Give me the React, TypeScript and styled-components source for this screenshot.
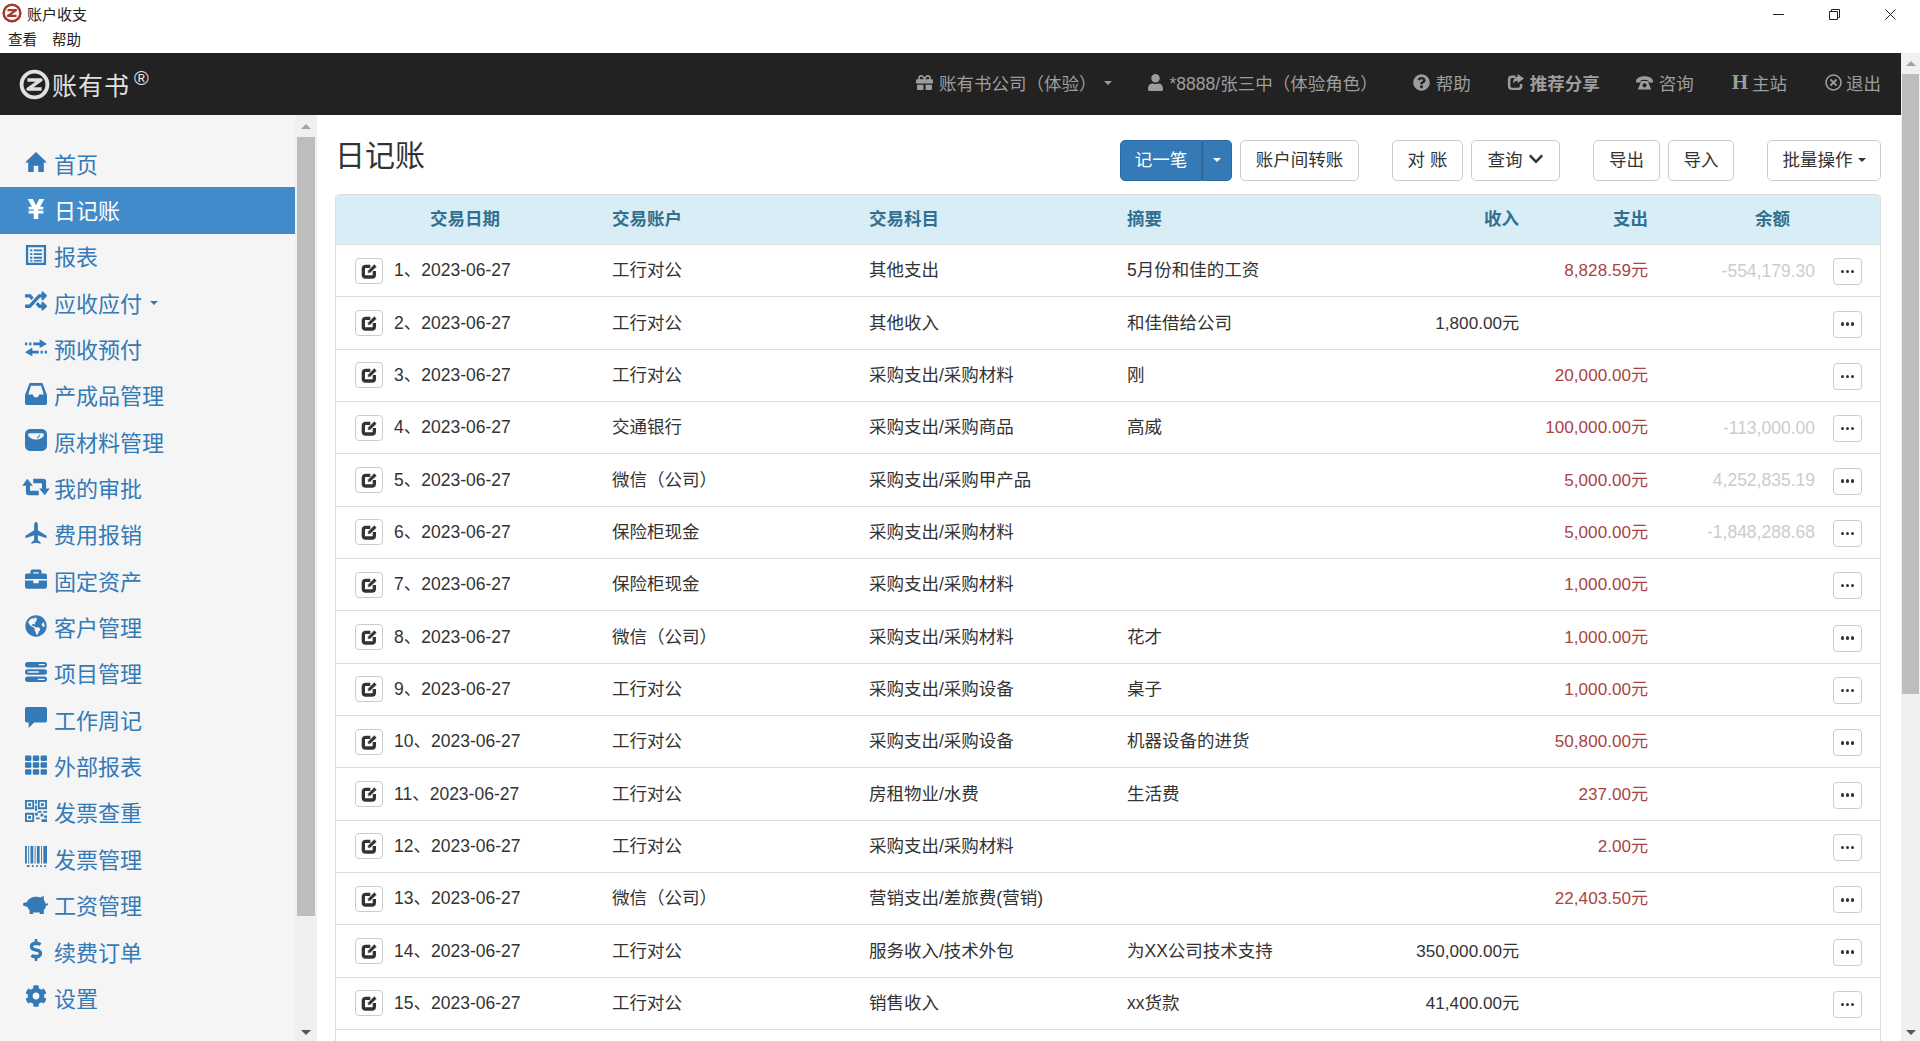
import React from "react";
import styled, { createGlobalStyle } from "styled-components";
import {
  FaRandom,
  FaBriefcase,
  FaGlobeAmericas,
  FaTh,
  FaDollarSign,
  FaCog,
  FaGift,
  FaUser,
  FaQuestionCircle,
  FaRegTimesCircle,
  FaChevronDown,
} from "react-icons/fa";

const FONT = `"Liberation Sans", "Noto Sans CJK SC", sans-serif`;
const BLUE = "#337ab7";

const GlobalStyle = createGlobalStyle`
  html, body {
    margin: 0;
    padding: 0;
    height: 100%;
    overflow: hidden;
    background: #fff;
  }
  #root {
    height: 100%;
  }
  * {
    box-sizing: border-box;
  }
`;

/* drawn icons, the package ones are not close enough to these glyphs */
const LogoMark = ({ size }: { size: number }) => (
  <svg width={size} height={size} viewBox="0 0 24 24" fill="none" stroke="currentColor">
    <circle cx="12" cy="12" r="10" strokeWidth="3" />
    <path d="M6.5 8.5h10.5L7 15.5h10.5" strokeWidth="2.6" strokeLinejoin="round" />
  </svg>
);
const HomeIcon = () => (
  <svg viewBox="0 0 24 24" fill="currentColor">
    <path d="M12 1l12 11.500h-3.500V23H14.500v-7h-5v7H3.500V12.500H0z" />
  </svg>
);
const YenIcon = () => (
  <svg viewBox="0 0 24 24" fill="currentColor">
    <path d="M3 1h5.500L12 8l3.500-7H21l-4.500 8.500H20v3h-5.500V14H20v3h-5.500v6h-5v-6H4v-3h5.500v-1.500H4v-3h3.500z" />
  </svg>
);
const TransferIcon = () => (
  <svg viewBox="0 0 24 24" fill="currentColor">
    <path d="M0 6h2.500v3H0zM4.500 6H7v3H4.500zM9 6h7V2.500L24 7.500 16 12V9H9zM24 15h-2.500v3H24zM19.500 15H17v3h2.500zM15 15H8v-3.500L0 16.500 8 21v-3h7z" />
  </svg>
);
const ListIcon = () => (
  <svg viewBox="0 0 24 24" fill="currentColor">
    <path
      fillRule="evenodd"
      d="M1 1h22v22H1zM3.500 3.500v17h17v-17zM5.500 6H8v2H5.500zM9.500 6h9v2h-9zM5.500 10H8v2H5.500zM9.500 10h9v2h-9zM5.500 14H8v2H5.500zM9.500 14h9v2h-9zM5.500 17.500H8v1.500H5.500zM9.500 17.500h9V19h-9z"
    />
  </svg>
);
const InboxIcon = () => (
  <svg viewBox="0 0 24 24" fill="currentColor">
    <path
      fillRule="evenodd"
      d="M5 0h14l5 13v9a2 2 0 0 1-2 2H2a2 2 0 0 1-2-2v-9zM6.500 3L3.500 12.500h5l1.500 3h4l1.500-3h5L17.500 3z"
    />
  </svg>
);
const ScaleIcon = () => (
  <svg viewBox="0 0 24 24" fill="currentColor">
    <path
      fillRule="evenodd"
      d="M6 0h12c3.500 0 6 2.500 6 6v12c0 3.500-2.500 6-6 6H6c-3.500 0-6-2.500-6-6V6c0-3.500 2.500-6 6-6zM5 4.500C3.800 4.500 3 5.500 3.500 6.800 4.500 9.500 8 11.500 12 11.500s7.500-2 8.500-4.700C21 5.500 20.200 4.500 19 4.500z"
    />
    <path d="M13 9.500l3-3.500.8.6-2.600 3.700z" />
  </svg>
);
const RetweetIcon = () => (
  <svg viewBox="0 0 24 24" fill="currentColor">
    <path d="M2.500 3l6 7.500h-3V16H15v5H4a3 3 0 0 1-3-3v-7.500h-4zM21.500 21l-6-7.500h3V8H9V3h11a3 3 0 0 1 3 3v7.500h4z" />
  </svg>
);
const PlaneIcon = () => (
  <svg viewBox="0 0 24 24" fill="currentColor">
    <path d="M12 0c1.200 0 2 1.500 2 3v6l9.500 6v2.800L14 14.500v5.500l3 2v1.800l-5-1.300-5 1.300V22l3-2v-5.500L.5 17.800V15L10 9V3c0-1.500.8-3 2-3z" />
  </svg>
);
const StackIcon = () => (
  <svg viewBox="0 0 24 24" fill="currentColor">
    <path
      fillRule="evenodd"
      d="M3 1h18a2.500 2.500 0 0 1 0 6H3a2.500 2.500 0 0 1 0-6zM15 3.200v1.500h6.500V3.200zM3 9h18a3 3 0 0 1 0 6H3a3 3 0 0 1 0-6zM3 11.300v1.500h12v-1.500zM3 17h18a3 3 0 0 1 0 6H3a3 3 0 0 1 0-6zM14 19.300v1.500h7.500v-1.500z"
    />
  </svg>
);
const CommentIcon = () => (
  <svg viewBox="0 0 24 24" fill="currentColor">
    <path d="M2 0h20a2 2 0 0 1 2 2v13a2 2 0 0 1-2 2H10l-6 6v-6H2a2 2 0 0 1-2-2V2a2 2 0 0 1 2-2z" />
  </svg>
);
const QrIcon = () => (
  <svg viewBox="0 0 24 24" fill="currentColor">
    <path
      fillRule="evenodd"
      d="M0 0h10v10H0zM2 2v6h6V2zM3.500 3.500h3v3h-3zM14 0h10v10H14zM16 2v6h6V2zM17.500 3.500h3v3h-3zM0 14h10v10H0zM2 16v6h6v-6zM3.500 17.500h3v3h-3zM11 0h2v4h-2zM11 6h2v6h-2zM14 12h4v2h-4zM20 12h4v2h-4zM11 14h3v3h-3zM17 15h3v3h-3zM12 19h4v2h-4zM21 17h3v3h-3zM18 21h6v3h-6z"
    />
  </svg>
);
const BarcodeIcon = () => (
  <svg viewBox="0 0 24 24" fill="currentColor">
    <path d="M0 0h2v19H0zM3.500 0h1v19h-1zM6 0h3v19H6zM10.500 0h1v19h-1zM13 0h3v19h-3zM17.500 0h1v19h-1zM20 0h4v19h-4zM2 21h3v2H2zM7.500 21h2v2h-2zM12 21h2v2h-2zM16.500 21h2v2h-2zM21 21h2v2h-2z" />
  </svg>
);
const PiggyIcon = () => (
  <svg viewBox="0 0 24 24" fill="currentColor">
    <path d="M-2 11l4-1c1-3 5-6 10-6 1.800 0 3.500.4 5 1l3.500-2v5c1.200 1 2 2.500 2.300 4 .7 0 1.400-.3 1.700-1l1 .6c-.5 1.500-1.700 2.200-2.700 2.200 0 2-1 3.700-2.300 5V23h-4.500v-2c-1.200.3-2.400.4-3.500.4s-2.300-.1-3.500-.4v2H5v-4.500C3.800 17.500 3 16.500 2.500 15L-2 14z" />
  </svg>
);
const ShareIcon = () => (
  <svg viewBox="0 0 24 24" fill="currentColor">
    <path
      d="M12 4H7a4 4 0 0 0-4 4v9a4 4 0 0 0 4 4h9a4 4 0 0 0 4-4v-3"
      fill="none"
      stroke="currentColor"
      strokeWidth="3.500"
    />
    <path d="M15 0l9 6.500-9 6.500V9.500c-3 0-5 1-6.500 4.500 0-6 2.500-9.500 6.500-10z" />
  </svg>
);
const PhoneIcon = () => (
  <svg viewBox="0 0 24 24" fill="currentColor">
    <path d="M0 10C0 6 5 3 12 3s12 3 12 7v2h-6.500V9c-1.600-.6-3.500-1-5.500-1s-3.900.4-5.500 1v3H0z" />
    <path fillRule="evenodd" d="M7.500 10h9l5 12h-19zM12 13a3 3 0 1 0 0 6 3 3 0 0 0 0-6z" />
  </svg>
);
const EditIcon = () => (
  <svg viewBox="0 0 24 24" fill="none" stroke="currentColor">
    <path d="M14 5H7a3.500 3.500 0 0 0-3.500 3.500v9A3.500 3.500 0 0 0 7 21h9.500a3.500 3.500 0 0 0 3.500-3.500V12" strokeWidth="5" />
    <path d="M9.500 15.500l1-4.500L20 1.500 24 5.500 14 15z" fill="currentColor" stroke="#fff" strokeWidth="1.200" />
  </svg>
);

/* window chrome */
const TitleBar = styled.header`
  height: 53px;
  flex: none;
  background: #fff;
  color: #222;
  font-family: ${FONT};
  display: flex;
  justify-content: space-between;
`;
const TitleLeft = styled.div`
  display: flex;
  flex-direction: column;
`;
const TitleRow = styled.div`
  height: 28px;
  display: flex;
  align-items: center;
  gap: 5px;
  padding-left: 2px;
  font-size: 15px;
  color: #a5392c;
`;
const TitleText = styled.span`
  color: #222;
`;
const MenuRow = styled.div`
  display: flex;
  gap: 15px;
  padding: 1px 0 0 8px;
  font-size: 14.5px;
  line-height: 26px;
`;
const WindowControls = styled.div`
  display: flex;
  height: 28px;
  align-items: center;
  padding-right: 24px;
  gap: 45px;
  color: #222;
`;
const ControlIcon = styled.svg`
  width: 11px;
  height: 11px;
  fill: none;
  stroke: currentColor;
  stroke-width: 1;
`;

const Body = styled.div`
  flex: 1;
  min-height: 0;
  display: flex;
`;
const AppColumn = styled.div`
  flex: 1;
  min-width: 0;
  display: flex;
  flex-direction: column;
`;

/* scrollbars */
const ScrollTrack = styled.div<{ $width: number; $pad: number }>`
  width: ${(p) => p.$width}px;
  flex: none;
  background: #f0f0f0;
  display: flex;
  flex-direction: column;
  padding: 0 ${(p) => p.$pad}px;
`;
const ScrollArrowBox = styled.div<{ $height: number }>`
  height: ${(p) => p.$height}px;
  flex: none;
  display: flex;
  align-items: center;
  justify-content: center;
`;
const ScrollArrow = styled.span<{ $down?: boolean }>`
  width: 0;
  height: 0;
  border-left: 5px solid transparent;
  border-right: 5px solid transparent;
  ${(p) =>
    p.$down ? "border-top: 5px solid #555;" : "border-bottom: 5px solid #a3a3a3;"}
`;
const ScrollThumb = styled.div<{ $height: number }>`
  height: ${(p) => p.$height}px;
  flex: none;
  background: #bdbdbd;
`;
const ScrollRest = styled.div`
  flex: 1;
`;

/* top bar */
const Navbar = styled.nav`
  height: 62px;
  flex: none;
  background: #222;
  display: flex;
  align-items: center;
  justify-content: space-between;
  padding: 0 20px 0 19px;
  font-family: ${FONT};
`;
const Brand = styled.div`
  display: flex;
  align-items: center;
  gap: 2px;
  color: #e0e0e0;
  font-size: 25px;
  letter-spacing: 1px;
`;
const BrandMark = styled.span`
  font-size: 20px;
  line-height: 1;
  margin: -12px 0 0 2px;
  letter-spacing: 0;
`;
const NavItems = styled.div`
  display: flex;
  align-items: center;
  margin-top: -3px;
`;
const NavItem = styled.a<{ $bold?: boolean; $ml?: number; $gap?: number }>`
  display: flex;
  align-items: center;
  gap: ${(p) => p.$gap ?? 6}px;
  margin-left: ${(p) => p.$ml ?? 0}px;
  color: #9d9d9d;
  font-size: 17.5px;
  font-weight: ${(p) => (p.$bold ? 700 : 400)};
  svg {
    width: 17px;
    height: 17px;
    flex: none;
  }
`;
const HeaderGlyph = styled.span`
  font-family: "Liberation Serif", serif;
  font-weight: 700;
  font-size: 21px;
  line-height: 1;
`;
const NavCaret = styled.span`
  width: 0;
  height: 0;
  margin-left: 1px;
  border-left: 4px solid transparent;
  border-right: 4px solid transparent;
  border-top: 4px solid #9d9d9d;
`;

/* left menu */
const Content = styled.div`
  flex: 1;
  min-height: 0;
  display: flex;
`;
const Sidebar = styled.aside`
  width: 317px;
  flex: none;
  display: flex;
  background: #f5f5f5;
`;
const SideList = styled.ul`
  width: 295px;
  flex: none;
  list-style: none;
  margin: 0;
  padding: 26px 0 0;
  font-family: ${FONT};
`;
const SideItem = styled.li<{ $active?: boolean }>`
  height: 46.35px;
  display: flex;
  align-items: center;
  padding: 0 0 3px 25px;
  font-size: 22px;
  color: ${(p) => (p.$active ? "#fff" : BLUE)};
  background: ${(p) => (p.$active ? "#428bca" : "transparent")};
`;
const SideIcon = styled.span`
  width: 22px;
  height: 22px;
  flex: none;
  margin: -1px 7px 0 0;
  display: flex;
  align-items: center;
  justify-content: center;
  svg {
    width: 22px;
    height: 22px;
    flex: none;
    overflow: visible;
  }
`;
const SideCaret = styled.span`
  width: 0;
  height: 0;
  margin: 3px 0 0 8px;
  border-left: 4px solid transparent;
  border-right: 4px solid transparent;
  border-top: 4px solid ${BLUE};
`;

/* page */
const Main = styled.main`
  flex: 1;
  min-width: 0;
  display: flex;
  flex-direction: column;
  padding: 25px 20px 0 18px;
  background: #fff;
  color: #333;
  font-family: ${FONT};
  font-size: 17.5px;
`;
const PageHead = styled.div`
  height: 41px;
  flex: none;
  margin-bottom: 13px;
  display: flex;
  align-items: center;
  justify-content: space-between;
`;
const PageTitle = styled.h3`
  margin: 0 0 16px;
  font-size: 30px;
  font-weight: 400;
  color: #333;
`;
const Toolbar = styled.div`
  display: flex;
`;
const ButtonGroup = styled.div`
  display: flex;
  gap: 8px;
  margin-left: 33px;
`;
const Button = styled.button<{ $width: number }>`
  width: ${(p) => p.$width}px;
  height: 41px;
  padding: 0 0 5px;
  background: #fff;
  border: 1px solid #ccc;
  border-radius: 5px;
  color: #333;
  font: inherit;
  display: flex;
  align-items: center;
  justify-content: center;
  gap: 5px;
  svg {
    width: 16px;
    height: 16px;
    margin-top: 2px;
  }
`;
const SplitButton = styled.div`
  display: flex;
`;
const PrimaryButton = styled.button<{ $width: number; $side: "left" | "right" }>`
  width: ${(p) => p.$width}px;
  height: 41px;
  padding: 0 0 5px;
  background: ${BLUE};
  border: 1px solid #2e6da4;
  border-radius: ${(p) => (p.$side === "left" ? "5px 0 0 5px" : "0 5px 5px 0")};
  ${(p) => (p.$side === "right" ? "border-left-color: #286090;" : "")}
  color: #fff;
  font: inherit;
  display: flex;
  align-items: center;
  justify-content: center;
`;
const Caret = styled.span<{ $color: string }>`
  width: 0;
  height: 0;
  margin-top: 4px;
  border-left: 4px solid transparent;
  border-right: 4px solid transparent;
  border-top: 4px solid ${(p) => p.$color};
`;

/* ledger table */
const Panel = styled.section`
  flex: 1;
  min-height: 0;
  border: 1px solid #ddd;
  border-bottom: 0;
  border-radius: 5px 5px 0 0;
  overflow: hidden;
`;
const COLUMNS = "276px 257px 258px 252px 140px 129px 167px 1fr";
const HeadRow = styled.div`
  height: 50px;
  padding-bottom: 5px;
  display: grid;
  grid-template-columns: ${COLUMNS};
  align-items: center;
  background: #d9edf7;
  color: #31708f;
  font-weight: 700;
  border-bottom: 1px solid #ddd;
`;
const HeadCell = styled.div<{ $align?: string; $pad?: string }>`
  text-align: ${(p) => p.$align || "left"};
  padding: ${(p) => p.$pad || "0"};
`;
const Row = styled.div`
  height: 52.35px;
  display: grid;
  grid-template-columns: ${COLUMNS};
  align-items: center;
  border-bottom: 1px solid #ddd;
`;
const DateCell = styled.div`
  display: flex;
  align-items: center;
  gap: 11px;
  padding-left: 19px;
`;
const DateText = styled.span`
  padding-bottom: 4px;
`;
const TextCell = styled.div`
  padding-bottom: 4px;
`;
const Amount = styled.div<{ $color?: string }>`
  padding-bottom: 4px;
  text-align: right;
  font-size: 17.1px;
  color: ${(p) => p.$color || "#333"};
`;
const Balance = styled.div`
  padding-top: 1px;
  text-align: right;
  color: #ccc;
`;
const SquareButton = styled.button<{ $w: number; $h: number }>`
  width: ${(p) => p.$w}px;
  height: ${(p) => p.$h}px;
  padding: 0;
  background: #fff;
  border: 1px solid #ccc;
  border-radius: 4px;
  color: #333;
  display: flex;
  align-items: center;
  justify-content: center;
  flex: none;
  svg {
    width: 16px;
    height: 16px;
  }
`;
const ActionCell = styled.div`
  padding: 2px 0 0 18px;
`;
const Dots = styled.span`
  display: flex;
  gap: 1.5px;
`;
const Dot = styled.i`
  width: 3.5px;
  height: 3.5px;
  border-radius: 50%;
  background: #333;
`;

const sideItems: { label: string; icon: React.ReactNode; active?: boolean; caret?: boolean }[] = [
  { label: "首页", icon: <HomeIcon /> },
  { label: "日记账", icon: <YenIcon />, active: true },
  { label: "报表", icon: <ListIcon /> },
  { label: "应收应付", icon: <FaRandom />, caret: true },
  { label: "预收预付", icon: <TransferIcon /> },
  { label: "产成品管理", icon: <InboxIcon /> },
  { label: "原材料管理", icon: <ScaleIcon /> },
  { label: "我的审批", icon: <RetweetIcon /> },
  { label: "费用报销", icon: <PlaneIcon /> },
  { label: "固定资产", icon: <FaBriefcase /> },
  { label: "客户管理", icon: <FaGlobeAmericas /> },
  { label: "项目管理", icon: <StackIcon /> },
  { label: "工作周记", icon: <CommentIcon /> },
  { label: "外部报表", icon: <FaTh /> },
  { label: "发票查重", icon: <QrIcon /> },
  { label: "发票管理", icon: <BarcodeIcon /> },
  { label: "工资管理", icon: <PiggyIcon /> },
  { label: "续费订单", icon: <FaDollarSign /> },
  { label: "设置", icon: <FaCog /> },
];

const rows = [
  { account: "工行对公", subject: "其他支出", memo: "5月份和佳的工资", out: "8,828.59", balance: "-554,179.30" },
  { account: "工行对公", subject: "其他收入", memo: "和佳借给公司", income: "1,800.00" },
  { account: "工行对公", subject: "采购支出/采购材料", memo: "刚", out: "20,000.00" },
  { account: "交通银行", subject: "采购支出/采购商品", memo: "高威", out: "100,000.00", balance: "-113,000.00" },
  { account: "微信（公司）", subject: "采购支出/采购甲产品", out: "5,000.00", balance: "4,252,835.19" },
  { account: "保险柜现金", subject: "采购支出/采购材料", out: "5,000.00", balance: "-1,848,288.68" },
  { account: "保险柜现金", subject: "采购支出/采购材料", out: "1,000.00" },
  { account: "微信（公司）", subject: "采购支出/采购材料", memo: "花才", out: "1,000.00" },
  { account: "工行对公", subject: "采购支出/采购设备", memo: "桌子", out: "1,000.00" },
  { account: "工行对公", subject: "采购支出/采购设备", memo: "机器设备的进货", out: "50,800.00" },
  { account: "工行对公", subject: "房租物业/水费", memo: "生活费", out: "237.00" },
  { account: "工行对公", subject: "采购支出/采购材料", out: "2.00" },
  { account: "微信（公司）", subject: "营销支出/差旅费(营销)", out: "22,403.50" },
  { account: "工行对公", subject: "服务收入/技术外包", memo: "为XX公司技术支持", income: "350,000.00" },
  { account: "工行对公", subject: "销售收入", memo: "xx货款", income: "41,400.00" },
];

const Shell = styled.div`
  width: 1920px;
  height: 1041px;
  display: flex;
  flex-direction: column;
  overflow: hidden;
`;

export default function App() {
  return (
    <Shell>
      <GlobalStyle />
      <TitleBar>
        <TitleLeft>
          <TitleRow>
            <LogoMark size={20} />
            <TitleText>账户收支</TitleText>
          </TitleRow>
          <MenuRow>
            <span>查看</span>
            <span>帮助</span>
          </MenuRow>
        </TitleLeft>
        <WindowControls>
          <ControlIcon viewBox="0 0 11 11">
            <path d="M0 5.500h11" />
          </ControlIcon>
          <ControlIcon viewBox="0 0 11 11">
            <path d="M.5 2.500h8v8h-8zM2.500 2.500v-2h8v8h-2" />
          </ControlIcon>
          <ControlIcon viewBox="0 0 11 11">
            <path d="M.5.5l10 10M10.500.5l-10 10" />
          </ControlIcon>
        </WindowControls>
      </TitleBar>
      <Body>
        <AppColumn>
          <Navbar>
            <Brand>
              <LogoMark size={31} />
              账有书
              <BrandMark>®</BrandMark>
            </Brand>
            <NavItems>
              <NavItem>
                <FaGift />
                账有书公司（体验）
                <NavCaret />
              </NavItem>
              <NavItem $ml={35}>
                <FaUser />
                *8888/张三中（体验角色）
              </NavItem>
              <NavItem $ml={35}>
                <FaQuestionCircle />
                帮助
              </NavItem>
              <NavItem $ml={36} $bold>
                <ShareIcon />
                推荐分享
              </NavItem>
              <NavItem $ml={36}>
                <PhoneIcon />
                咨询
              </NavItem>
              <NavItem $ml={38} $gap={4}>
                <HeaderGlyph>H</HeaderGlyph>
                主站
              </NavItem>
              <NavItem $ml={38} $gap={4}>
                <FaRegTimesCircle />
                退出
              </NavItem>
            </NavItems>
          </Navbar>
          <Content>
            <Sidebar>
              <SideList>
                {sideItems.map((item) => (
                  <SideItem key={item.label} $active={item.active}>
                    <SideIcon>{item.icon}</SideIcon>
                    {item.label}
                    {item.caret && <SideCaret />}
                  </SideItem>
                ))}
              </SideList>
              <ScrollTrack $width={22} $pad={2}>
                <ScrollArrowBox $height={22}>
                  <ScrollArrow />
                </ScrollArrowBox>
                <ScrollThumb $height={779} />
                <ScrollRest />
                <ScrollArrowBox $height={18}>
                  <ScrollArrow $down />
                </ScrollArrowBox>
              </ScrollTrack>
            </Sidebar>
            <Main>
              <PageHead>
                <PageTitle>日记账</PageTitle>
                <Toolbar>
                  <ButtonGroup>
                    <SplitButton>
                      <PrimaryButton $width={82} $side="left">
                        记一笔
                      </PrimaryButton>
                      <PrimaryButton $width={30} $side="right">
                        <Caret $color="#fff" />
                      </PrimaryButton>
                    </SplitButton>
                    <Button $width={119}>账户间转账</Button>
                  </ButtonGroup>
                  <ButtonGroup>
                    <Button $width={71}>对 账</Button>
                    <Button $width={89}>
                      查询
                      <FaChevronDown />
                    </Button>
                  </ButtonGroup>
                  <ButtonGroup>
                    <Button $width={67}>导出</Button>
                    <Button $width={66}>导入</Button>
                  </ButtonGroup>
                  <ButtonGroup>
                    <Button $width={114}>
                      批量操作
                      <Caret $color="#333" />
                    </Button>
                  </ButtonGroup>
                </Toolbar>
              </PageHead>
              <Panel>
                <HeadRow>
                  <HeadCell $pad="0 0 0 94px">交易日期</HeadCell>
                  <HeadCell>交易账户</HeadCell>
                  <HeadCell>交易科目</HeadCell>
                  <HeadCell>摘要</HeadCell>
                  <HeadCell $align="right">收入</HeadCell>
                  <HeadCell $align="right">支出</HeadCell>
                  <HeadCell $align="right" $pad="0 25px 0 0">
                    余额
                  </HeadCell>
                  <HeadCell />
                </HeadRow>
                {rows.map((row, i) => (
                  <Row key={i}>
                    <DateCell>
                      <SquareButton $w={28} $h={26}>
                        <EditIcon />
                      </SquareButton>
                      <DateText>{i + 1}、2023-06-27</DateText>
                    </DateCell>
                    <TextCell>{row.account}</TextCell>
                    <TextCell>{row.subject}</TextCell>
                    <TextCell>{row.memo}</TextCell>
                    <Amount>{row.income && `${row.income}元`}</Amount>
                    <Amount $color="#a94442">{row.out && `${row.out}元`}</Amount>
                    <Balance>{row.balance}</Balance>
                    <ActionCell>
                      <SquareButton $w={29} $h={27}>
                        <Dots>
                          <Dot />
                          <Dot />
                          <Dot />
                        </Dots>
                      </SquareButton>
                    </ActionCell>
                  </Row>
                ))}
              </Panel>
            </Main>
          </Content>
        </AppColumn>
        <ScrollTrack $width={19} $pad={1}>
          <ScrollArrowBox $height={21}>
            <ScrollArrow />
          </ScrollArrowBox>
          <ScrollThumb $height={620} />
          <ScrollRest />
          <ScrollArrowBox $height={18}>
            <ScrollArrow $down />
          </ScrollArrowBox>
        </ScrollTrack>
      </Body>
    </Shell>
  );
}
